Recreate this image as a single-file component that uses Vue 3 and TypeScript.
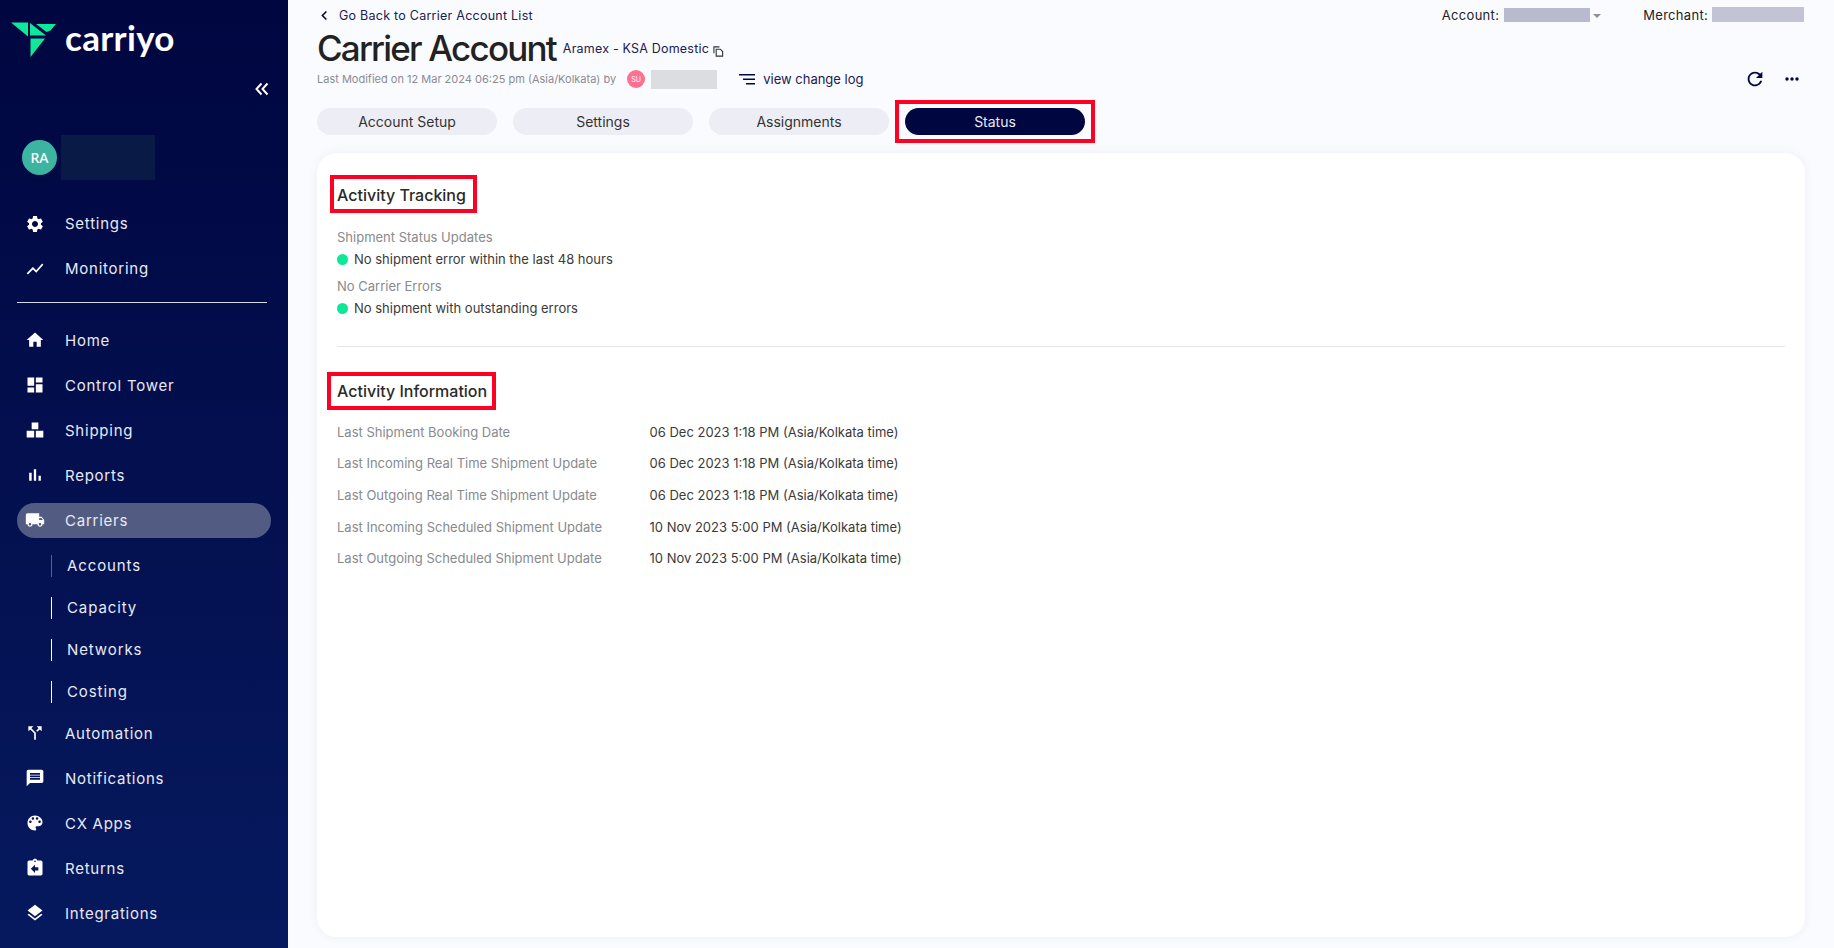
<script setup lang="ts">
interface NavItem {
  label: string
  paths: string
  active?: boolean
}

const topNav: NavItem[] = [
  {
    label: 'Settings',
    paths:
      'M19.14 12.94c.04-.3.06-.61.06-.94 0-.32-.02-.64-.07-.94l2.03-1.58c.18-.14.23-.41.12-.61l-1.92-3.32c-.12-.22-.37-.29-.59-.22l-2.39.96c-.5-.38-1.03-.7-1.62-.94l-.36-2.54c-.04-.24-.24-.41-.48-.41h-3.84c-.24 0-.43.17-.47.41l-.36 2.54c-.59.24-1.13.57-1.62.94l-2.39-.96c-.22-.08-.47 0-.59.22L2.74 8.87c-.12.21-.08.47.12.61l2.03 1.58c-.05.3-.09.63-.09.94s.02.64.07.94l-2.03 1.58c-.18.14-.23.41-.12.61l1.92 3.32c.12.22.37.29.59.22l2.39-.96c.5.38 1.03.7 1.62.94l.36 2.54c.05.24.24.41.48.41h3.84c.24 0 .44-.17.47-.41l.36-2.54c.59-.24 1.13-.56 1.62-.94l2.39.96c.22.08.47 0 .59-.22l1.92-3.32c.12-.22.07-.47-.12-.61l-2.01-1.58zM12 15.6c-1.98 0-3.6-1.62-3.6-3.6s1.62-3.6 3.6-3.6 3.6 1.62 3.6 3.6-1.62 3.6-3.6 3.6z'
  },
  { label: 'Monitoring', paths: 'M3.5 18.49l6-6.01 4 4L22 6.92l-1.41-1.41-7.09 7.97-4-4L2 16.99z' }
]

const mainNav: NavItem[] = [
  { label: 'Home', paths: 'M10 20v-6h4v6h5v-8h3L12 3 2 12h3v8z' },
  { label: 'Control Tower', paths: 'M3 13h8V3H3v10zm0 8h8v-6H3v6zm10 0h8V11h-8v10zm0-18v6h8V3h-8z' },
  { label: 'Shipping', paths: 'M8 3h8v8H8zM2 13h9v8H2zM13 13h9v8h-9z' },
  { label: 'Reports', paths: 'M5 9.2h3V19H5zM10.6 5h2.8v14h-2.8zm5.6 8H19v6h-2.8z' },
  {
    label: 'Carriers',
    active: true,
    paths:
      'M20 8h-3V4H3c-1.1 0-2 .9-2 2v11h2c0 1.66 1.34 3 3 3s3-1.34 3-3h6c0 1.66 1.34 3 3 3s3-1.34 3-3h2v-5l-3-4zM6 18.5c-.83 0-1.5-.67-1.5-1.5s.67-1.5 1.5-1.5 1.5.67 1.5 1.5-.67 1.5-1.5 1.5zm13.5-9l1.96 2.5H17V9.5h2.5zm-1.5 9c-.83 0-1.5-.67-1.5-1.5s.67-1.5 1.5-1.5 1.5.67 1.5 1.5-.67 1.5-1.5 1.5z'
  }
]

const subNav = ['Accounts', 'Capacity', 'Networks', 'Costing']

const lowerNav: NavItem[] = [
  {
    label: 'Automation',
    paths: 'M14 4l2.29 2.29-2.88 2.88 1.42 1.42 2.88-2.88L20 10V4zm-4 0H4v6l2.29-2.29 4.71 4.7V20h2v-8.41l-5.29-5.3z'
  },
  {
    label: 'Notifications',
    paths: 'M20 2H4c-1.1 0-1.99.9-1.99 2L2 22l4-4h14c1.1 0 2-.9 2-2V4c0-1.1-.9-2-2-2zM18 14H6v-2h12v2zm0-3H6V9h12v2zm0-3H6V6h12v2z'
  },
  {
    label: 'CX Apps',
    paths:
      'M12 3c-4.97 0-9 4.03-9 9s4.03 9 9 9c.83 0 1.5-.67 1.5-1.5 0-.39-.15-.74-.39-1.01-.23-.26-.38-.61-.38-.99 0-.83.67-1.5 1.5-1.5H16c2.76 0 5-2.24 5-5 0-4.42-4.03-8-9-8zm-5.5 9c-.83 0-1.5-.67-1.5-1.5S5.67 9 6.5 9 8 9.67 8 10.5 7.33 12 6.5 12zm3-4C8.67 8 8 7.33 8 6.5S8.67 5 9.5 5s1.5.67 1.5 1.5S10.33 8 9.5 8zm5 0c-.83 0-1.5-.67-1.5-1.5S13.67 5 14.5 5s1.5.67 1.5 1.5S15.33 8 14.5 8zm3 4c-.83 0-1.5-.67-1.5-1.5S16.67 9 17.5 9s1.5.67 1.5 1.5-.67 1.5-1.5 1.5z'
  },
  {
    label: 'Returns',
    paths:
      'M19 3h-4.18C14.4 1.84 13.3 1 12 1c-1.3 0-2.4.84-2.82 2H5c-1.1 0-2 .9-2 2v14c0 1.1.9 2 2 2h14c1.1 0 2-.9 2-2V5c0-1.1-.9-2-2-2zm-7 0c.55 0 1 .45 1 1s-.45 1-1 1-1-.45-1-1 .45-1 1-1zm4 12h-4v3l-5-5 5-5v3h4v4z'
  },
  {
    label: 'Integrations',
    paths: 'M11.99 18.54l-7.37-5.73L3 14.07l9 7 9-7-1.63-1.27-7.38 5.74zM12 16l7.36-5.73L21 9l-9-7-9 7 1.63 1.27L12 16z'
  }
]

const tabs = ['Account Setup', 'Settings', 'Assignments']

const activityRows = [
  { label: 'Last Shipment Booking Date', value: '06 Dec 2023 1:18 PM (Asia/Kolkata time)' },
  { label: 'Last Incoming Real Time Shipment Update', value: '06 Dec 2023 1:18 PM (Asia/Kolkata time)' },
  { label: 'Last Outgoing Real Time Shipment Update', value: '06 Dec 2023 1:18 PM (Asia/Kolkata time)' },
  { label: 'Last Incoming Scheduled Shipment Update', value: '10 Nov 2023 5:00 PM (Asia/Kolkata time)' },
  { label: 'Last Outgoing Scheduled Shipment Update', value: '10 Nov 2023 5:00 PM (Asia/Kolkata time)' }
]
</script>

<template>
  <div class="layout">
    <aside class="sidebar">
      <div class="logo">
        <svg class="logo-mark" viewBox="0 0 48 36" width="48" height="36">
          <path d="M1 0.5h17v14z" />
          <path d="M20 1l16 12.5h-16z" />
          <path d="M26 2h20l-5.5 6.5-4 1.5z" />
          <path d="M20.500 16.500h14.500l-14.500 18.500z" />
        </svg>
        <span class="logo-text">carriyo</span>
      </div>

      <div class="collapse">
        <svg viewBox="0 0 14 14" width="14" height="14" fill="none" stroke="#fff" stroke-width="2">
          <path d="M6.500 1.500L1.500 7l5 5.500M12.500 1.500L7.500 7l5 5.500" />
        </svg>
      </div>

      <div class="profile">
        <span class="profile-avatar">RA</span>
        <span class="profile-name"></span>
      </div>

      <nav class="nav">
        <a v-for="item in topNav" :key="item.label" class="nav-item">
          <svg class="nav-icon" viewBox="0 0 24 24"><path :d="item.paths" /></svg>
          {{ item.label }}
        </a>
        <div class="nav-divider"></div>
        <a v-for="item in mainNav" :key="item.label" class="nav-item" :class="{ active: item.active }">
          <svg class="nav-icon" viewBox="0 0 24 24"><path :d="item.paths" /></svg>
          {{ item.label }}
        </a>
        <div class="sub-nav">
          <a v-for="(sub, i) in subNav" :key="sub" class="sub-item" :class="{ current: i === 0 }">{{ sub }}</a>
        </div>
        <a v-for="item in lowerNav" :key="item.label" class="nav-item">
          <svg class="nav-icon" viewBox="0 0 24 24"><path :d="item.paths" /></svg>
          {{ item.label }}
        </a>
      </nav>
    </aside>

    <main class="main">
      <div class="top-row">
        <a class="back-link">
          <svg viewBox="0 0 10 12" width="8" height="11" fill="none" stroke="#000640" stroke-width="2">
            <path d="M8 1L3 6l5 5" />
          </svg>
          Go Back to Carrier Account List
        </a>
        <div class="selectors">
          <span class="selector-label">Account:</span>
          <span class="mask mask-account"></span>
          <span class="caret"></span>
          <span class="selector-label merchant-label">Merchant:</span>
          <span class="mask mask-merchant"></span>
        </div>
      </div>

      <div class="title-row">
        <h1>Carrier Account</h1>
        <span class="account-name">Aramex - KSA Domestic</span>
        <svg class="copy-icon" viewBox="0 0 12 12" width="11" height="11" fill="#fff" stroke="#333" stroke-width="1.2">
          <path d="M1 8V1h6" fill="none" />
          <path d="M3.500 3.500h4.500l2.500 2.500v5h-7z" />
        </svg>
      </div>

      <div class="meta-row">
        <span class="modified">Last Modified on 12 Mar 2024 06:25 pm (Asia/Kolkata) by</span>
        <span class="user-badge">SU</span>
        <span class="mask mask-user"></span>
        <a class="change-log">
          <svg viewBox="0 0 16 11" width="16" height="11" fill="#000640">
            <path d="M0 0h16v1.600H0zM4 4.500h12v1.600H4zM7 9h9v1.600H7z" />
          </svg>
          view change log
        </a>
        <div class="actions">
          <svg viewBox="0 0 24 24" width="22" height="22" fill="#000640">
            <path
              d="M17.650 6.350C16.200 4.900 14.210 4 12 4c-4.420 0-7.990 3.580-7.990 8s3.570 8 7.990 8c3.730 0 6.840-2.550 7.730-6h-2.080c-.82 2.330-3.040 4-5.650 4-3.310 0-6-2.690-6-6s2.690-6 6-6c1.660 0 3.140.69 4.220 1.780L13 11h7V4l-2.350 2.350z"
            />
          </svg>
          <svg viewBox="0 0 14 4" width="14" height="4" fill="#000640">
            <circle cx="2" cy="2" r="1.700" />
            <circle cx="7" cy="2" r="1.700" />
            <circle cx="12" cy="2" r="1.700" />
          </svg>
        </div>
      </div>

      <div class="tabs">
        <button v-for="tab in tabs" :key="tab" class="tab">{{ tab }}</button>
        <button class="tab tab-active">
          Status
          <span class="callout callout-tab"></span>
        </button>
      </div>

      <section class="card">
        <h2 class="section-title">
          Activity Tracking
          <span class="callout callout-tracking"></span>
        </h2>
        <div class="status-label first-label">Shipment Status Updates</div>
        <div class="status-value"><span class="dot"></span>No shipment error within the last 48 hours</div>
        <div class="status-label">No Carrier Errors</div>
        <div class="status-value"><span class="dot"></span>No shipment with outstanding errors</div>

        <hr class="separator" />

        <h2 class="section-title">
          Activity Information
          <span class="callout callout-info"></span>
        </h2>
        <div class="info-list">
          <div v-for="row in activityRows" :key="row.label" class="info-row">
            <span class="info-label">{{ row.label }}</span>
            <span class="info-value">{{ row.value }}</span>
          </div>
        </div>
      </section>
    </main>
  </div>
</template>

<style>
html,
body {
  margin: 0;
  background: #fafbff;
}
</style>

<style scoped>
.layout {
  display: flex;
  height: 948px;
  overflow: hidden;
  font-family: Inter, 'Liberation Sans', sans-serif;
  background: #fafbff;
}

.sidebar {
  width: 288px;
  flex: none;
  background: linear-gradient(180deg, #000640 0%, #06195e 100%);
  color: #fff;
}

.logo {
  display: flex;
  align-items: center;
  height: 36px;
  margin-top: 22px;
  padding-left: 10px;
}

.logo-mark {
  fill: #0ee89b;
}

.logo-text {
  margin-left: 7px;
  margin-top: -6px;
  font-family: Lato, sans-serif;
  font-size: 35px;
  font-weight: 700;
  letter-spacing: 0.3px;
  line-height: 36px;
}

.collapse {
  display: flex;
  justify-content: flex-end;
  height: 14px;
  margin-top: 24px;
  padding-right: 19px;
}

.profile {
  display: flex;
  align-items: center;
  height: 45px;
  margin-top: 39px;
  padding-left: 22px;
}

.profile-avatar {
  display: flex;
  align-items: center;
  justify-content: center;
  width: 35px;
  height: 35px;
  border-radius: 50%;
  background: #3db3a2;
  font-family: 'Noto Sans', sans-serif;
  font-size: 14px;
  font-weight: 500;
}

.profile-name {
  width: 94px;
  height: 45px;
  margin-left: 4px;
  background: #0a1a47;
}

.nav {
  display: flex;
  flex-direction: column;
  gap: 10px;
  margin-top: 26px;
  padding-left: 17px;
}

.nav-item {
  display: flex;
  align-items: center;
  width: 254px;
  height: 35px;
  border-radius: 18px;
  font-size: 15px;
  letter-spacing: 0.75px;
  color: #e8e9f3;
}

.nav-item.active {
  background: #525c83;
}

.nav-icon {
  width: 20px;
  height: 20px;
  margin-left: 8px;
  margin-right: 20px;
  fill: #fff;
}

.nav-divider {
  width: 250px;
  height: 1px;
  margin: 5.600px 0 10px;
  background: #d5d8e6;
}

.sub-nav {
  display: flex;
  flex-direction: column;
  gap: 20px;
  padding: 7.500px 0 2.500px 34px;
}

.sub-item {
  height: 22px;
  padding-left: 15px;
  border-left: 1.500px solid #fff;
  font-size: 15px;
  line-height: 22px;
  letter-spacing: 0.9px;
  color: #e8e9f3;
}

.sub-item.current {
  border-left-color: #c8305f;
}

.main {
  flex: 1;
  min-width: 0;
  padding: 0 29px;
}

.top-row {
  display: flex;
  align-items: center;
  justify-content: space-between;
  height: 30px;
}

.back-link {
  display: flex;
  align-items: center;
  gap: 11px;
  margin-left: 3px;
  font-size: 12.500px;
  letter-spacing: 0.25px;
  color: #1b2050;
}

.selectors {
  display: flex;
  align-items: center;
  margin-top: -1px;
  font-size: 13px;
  letter-spacing: 0.3px;
  color: #222;
}

.selector-label {
  margin-right: 5px;
}

.merchant-label {
  margin-left: 42px;
  margin-right: 4px;
}

.mask {
  display: block;
}

.mask-account {
  width: 86px;
  height: 14px;
  background: #b8bbcd;
}

.mask-merchant {
  width: 92px;
  height: 15px;
  margin-right: 1px;
  background: #c2c3d3;
}

.caret {
  margin-left: 3px;
  margin-top: 3px;
  border-left: 4px solid transparent;
  border-right: 4px solid transparent;
  border-top: 4px solid #8f8f96;
}

.title-row {
  display: flex;
  align-items: center;
  height: 36px;
}

h1 {
  margin: 0;
  font-size: 35px;
  font-weight: 500;
  letter-spacing: -1.800px;
  line-height: 36px;
  color: #222;
}

.account-name {
  margin-left: 7px;
  margin-top: 1px;
  font-size: 12.500px;
  letter-spacing: 0.2px;
  color: #1b2050;
}

.copy-icon {
  margin-left: 4px;
  margin-top: 6px;
}

.meta-row {
  display: flex;
  align-items: center;
  height: 26px;
}

.modified {
  font-size: 11px;
  color: #8a8c92;
}

.user-badge {
  display: flex;
  align-items: center;
  justify-content: center;
  width: 18px;
  height: 18px;
  margin-left: 11px;
  border-radius: 50%;
  background: #ff6f91;
  font-size: 7px;
  color: #fff;
}

.mask-user {
  width: 66px;
  height: 19px;
  margin-left: 6px;
  background: #dcdde1;
}

.change-log {
  display: flex;
  align-items: center;
  gap: 8px;
  margin-left: 22px;
  font-size: 13px;
  color: #1b2050;
}

.actions {
  display: flex;
  align-items: center;
  gap: 19px;
  margin-left: auto;
  padding-right: 6px;
}

.tabs {
  display: flex;
  gap: 16px;
  height: 27px;
  margin-top: 16px;
}

.tab {
  position: relative;
  width: 180px;
  height: 27px;
  padding: 0;
  border: none;
  border-radius: 14px;
  background: #edeef5;
  font-family: inherit;
  font-size: 14px;
  color: #333;
}

.tab-active {
  background: #000640;
  color: #e8e9f3;
}

.callout {
  position: absolute;
  border: 4px solid #ff0022;
  pointer-events: none;
}

.callout-tab {
  inset: -8px -10px;
}

.callout-tracking {
  inset: -8px -11px -6px -7px;
}

.callout-info {
  inset: -7px -9px -7px -10px;
}

.card {
  height: 784px;
  box-sizing: border-box;
  margin-top: 18px;
  padding: 30px 20px 0;
  border-radius: 20px;
  background: #fff;
  box-shadow: 0 0 12px rgba(0, 6, 64, 0.05);
}

.section-title {
  position: relative;
  width: fit-content;
  margin: 0;
  font-size: 16px;
  font-weight: 500;
  line-height: 24px;
  color: #2a2a2a;
}

.status-label {
  height: 18px;
  margin-top: 9px;
  font-size: 13px;
  line-height: 18px;
  color: #888a8e;
}

.first-label {
  margin-top: 21px;
}

.status-value {
  display: flex;
  align-items: center;
  height: 18px;
  margin-top: 4px;
  font-size: 13px;
  line-height: 18px;
  color: #3a3a3a;
}

.dot {
  width: 11px;
  height: 11px;
  margin-right: 6px;
  border-radius: 50%;
  background: #0ce895;
}

.separator {
  height: 1px;
  margin: 29px 0 0;
  border: none;
  background: #e6e6e8;
}

.separator + .section-title {
  margin-top: 31.500px;
}

.info-list {
  display: flex;
  flex-direction: column;
  gap: 13.700px;
  margin-top: 20px;
}

.info-row {
  display: flex;
  align-items: center;
  height: 18px;
  font-size: 13px;
}

.info-label {
  width: 312.500px;
  color: #888a8e;
}

.info-value {
  color: #3a3a3a;
}
</style>
